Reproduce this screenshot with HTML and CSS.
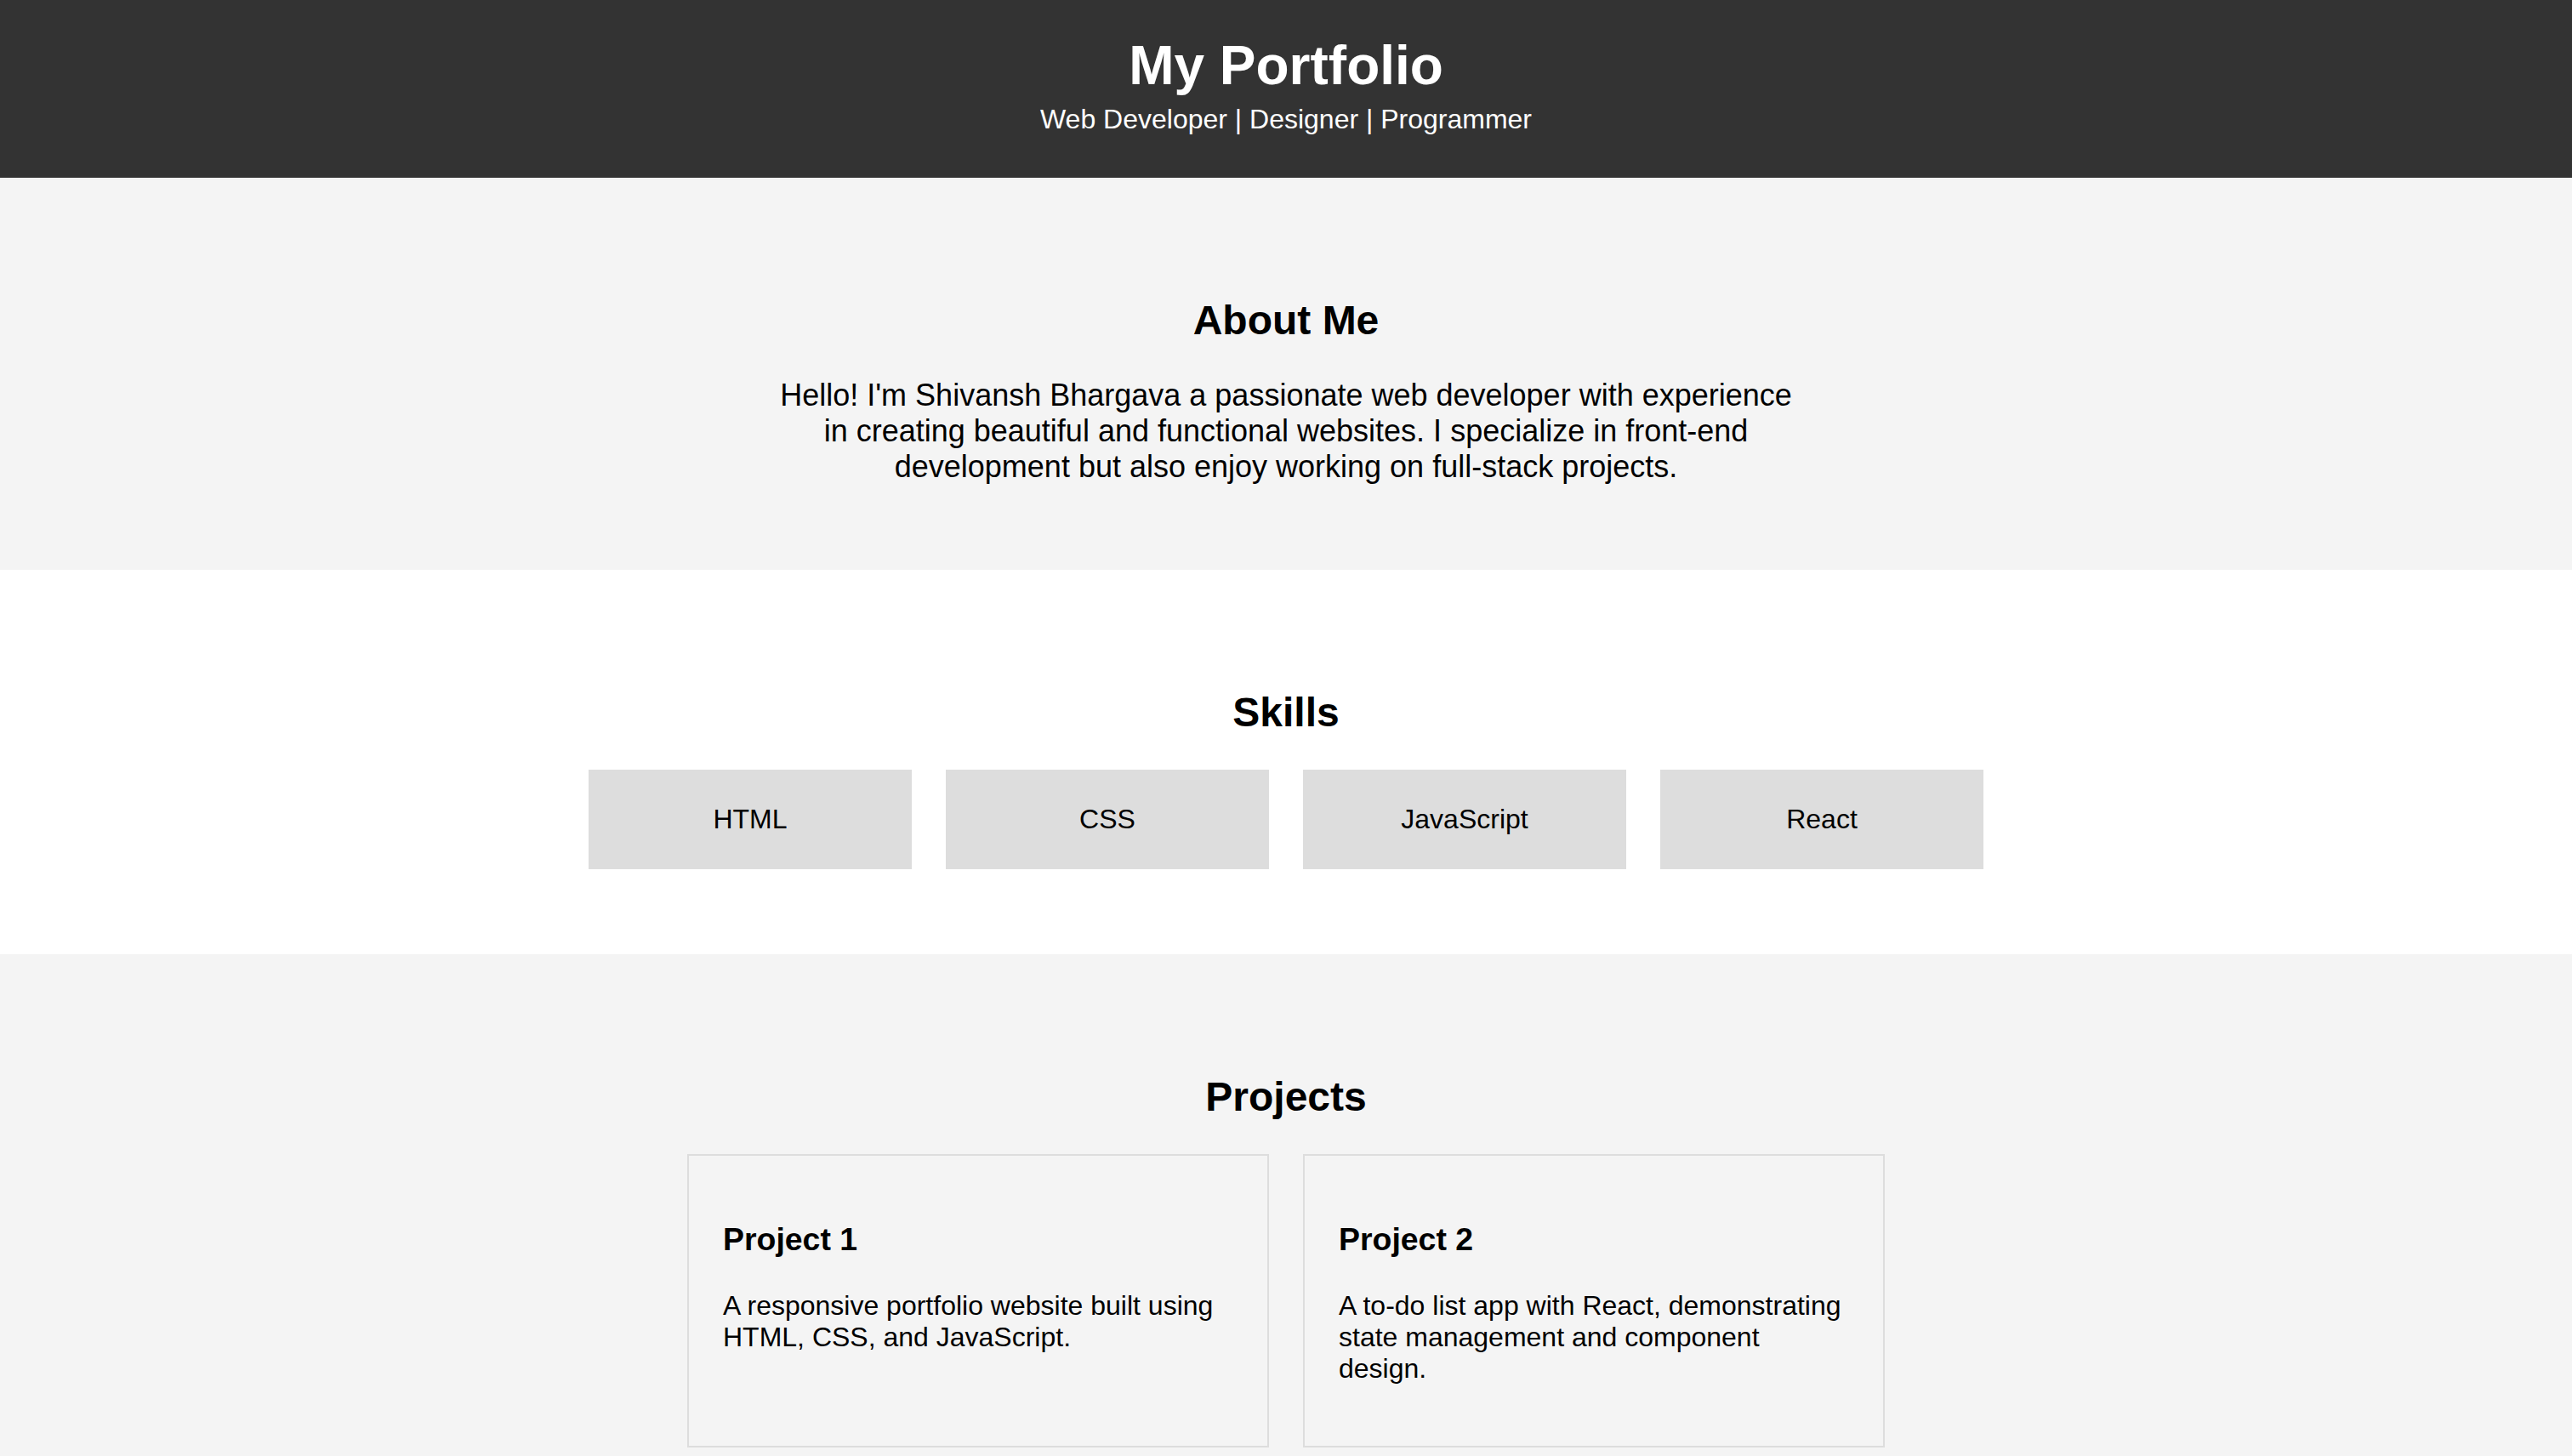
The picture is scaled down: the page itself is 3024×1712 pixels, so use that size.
FILE: index.html
```html
<!DOCTYPE html>
<html lang="en">
<head>
<meta charset="UTF-8">
<title>My Portfolio</title>
<link rel="stylesheet" href="styles.css">
</head>
<body>
<header class="site-header">
  <h1 class="site-title">My Portfolio</h1>
  <p class="site-tagline">Web Developer | Designer | Programmer</p>
</header>

<section class="section section-alt">
  <h2 class="section-title">About Me</h2>
  <p class="about-text">Hello! I'm Shivansh Bhargava a passionate web developer with experience in creating beautiful and functional websites. I specialize in front-end development but also enjoy working on full-stack projects.</p>
</section>

<section class="section">
  <h2 class="section-title">Skills</h2>
  <div class="skill-list">
    <div class="skill">HTML</div>
    <div class="skill">CSS</div>
    <div class="skill">JavaScript</div>
    <div class="skill">React</div>
  </div>
</section>

<section class="section section-alt">
  <h2 class="section-title">Projects</h2>
  <div class="project-list">
    <div class="project">
      <h3 class="project-title">Project 1</h3>
      <p class="project-text">A responsive portfolio website built using HTML, CSS, and JavaScript.</p>
    </div>
    <div class="project">
      <h3 class="project-title">Project 2</h3>
      <p class="project-text">A to-do list app with React, demonstrating state management and component design.</p>
    </div>
  </div>
</section>
</body>
</html>
```
FILE: styles.css
```css
* {
  box-sizing: border-box;
}

body {
  margin: 0;
  font-family: "Liberation Sans", Arial, Helvetica, sans-serif;
  color: #000;
  background: #fff;
}

.site-header {
  background: #333;
  color: #fff;
  text-align: center;
  padding: 40px 0 42px;
}

.site-title {
  margin: 0;
  font-size: 64px;
  font-weight: bold;
}

.site-tagline {
  margin: 8px 0;
  font-size: 32px;
}

.section {
  padding: 100px 40px;
  text-align: center;
  background: #fff;
}

.section-alt {
  background: #f4f4f4;
}

.section-title {
  font-size: 48px;
  font-weight: bold;
  margin: 40px 0;
}

.about-text {
  max-width: 1200px;
  margin: 0 auto;
  font-size: 36px;
}

.skill-list {
  display: flex;
  justify-content: center;
  gap: 40px;
}

.skill {
  width: 380px;
  padding: 40px;
  background: #ddd;
  font-size: 32px;
}

.project-list {
  display: flex;
  justify-content: center;
  gap: 40px;
}

.project {
  width: 684px;
  padding: 40px;
  border: 2px solid #ddd;
  text-align: left;
}

.project-title {
  font-size: 37.44px;
  font-weight: bold;
  margin: 37.44px 0;
}

.project-text {
  font-size: 32px;
  margin: 32px 0;
}
```
